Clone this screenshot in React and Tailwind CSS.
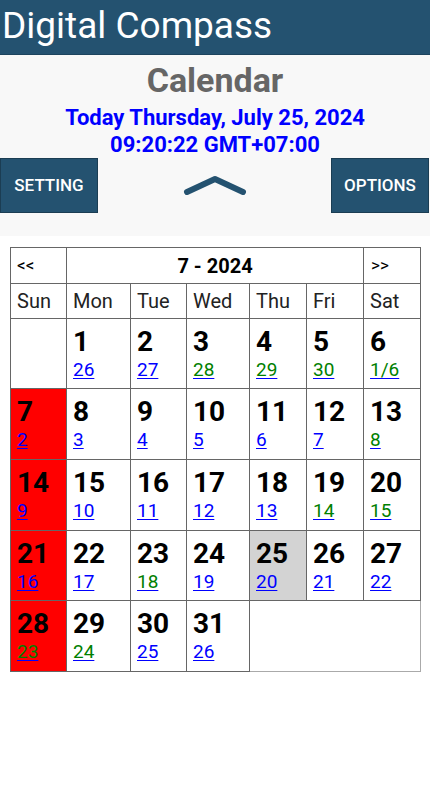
import React from 'react';

const days = ['Sun', 'Mon', 'Tue', 'Wed', 'Thu', 'Fri', 'Sat'];

// solar day -> lunar label
const lunar = {
  1: '26', 2: '27', 3: '28', 4: '29', 5: '30', 6: '1/6', 7: '2', 8: '3', 9: '4', 10: '5',
  11: '6', 12: '7', 13: '8', 14: '9', 15: '10', 16: '11', 17: '12', 18: '13', 19: '14', 20: '15',
  21: '16', 22: '17', 23: '18', 24: '19', 25: '20', 26: '21', 27: '22', 28: '23', 29: '24', 30: '25', 31: '26',
};
const green = [3, 4, 5, 6, 13, 19, 20, 23, 28, 29];

const weeks = [
  [null, 1, 2, 3, 4, 5, 6],
  [7, 8, 9, 10, 11, 12, 13],
  [14, 15, 16, 17, 18, 19, 20],
  [21, 22, 23, 24, 25, 26, 27],
  [28, 29, 30, 31],
];
const rowHeights = ['h-[70px]', 'h-[71px]', 'h-[71px]', 'h-[70px]', 'h-[71px]'];

const DayCell = ({ day, col }) => {
  if (!day) return <td className="border border-[#666] bg-white" />;
  const bg = col === 0 ? 'bg-[#ff0000]' : day === 25 ? 'bg-[#d3d3d3]' : 'bg-white';
  return (
    <td className={`border border-[#666] align-top pl-[6px] pt-[6px] ${bg}`}>
      <div className="text-[28px] font-bold leading-[33px] text-black">{day}</div>
      <a
        href="#"
        className={`block text-[19px] leading-[23px] underline decoration-[#0000ff] underline-offset-2 ${
          green.includes(day) ? 'text-[#008000]' : 'text-[#0000ff]'
        }`}
      >
        {lunar[day]}
      </a>
    </td>
  );
};

const App = () => {
  return (
    <div className="min-h-screen bg-white font-['Roboto',sans-serif]">
      <header className="h-[55px] bg-[#245270] border-b border-[#1d445e] pl-[2px] text-[37px] leading-[52px] text-white">
        Digital Compass
      </header>

      <section className="bg-[#f8f8f8] pb-[23px]">
        <h1 className="pt-[6px] text-center text-[34px] font-bold leading-[38px] text-[#666]">Calendar</h1>
        <div className="mt-[5px] text-center text-[22px] font-bold leading-[27px] text-[#0000ff]">
          <p>Today Thursday, July 25, 2024</p>
          <p>09:20:22 GMT+07:00</p>
        </div>
        <div className="flex h-[55px] items-center justify-between">
          <button className="h-full w-[98px] border border-[#1b3d53] bg-[#245270] text-[17px] font-medium text-white">
            SETTING
          </button>
          <svg width="64" height="22" viewBox="0 0 64 22" className="mt-[-2px]">
            <polyline
              points="4,18 32,5 60,18"
              fill="none"
              stroke="#245270"
              strokeWidth="6"
              strokeLinecap="round"
              strokeLinejoin="round"
            />
          </svg>
          <button className="mr-[1px] h-full w-[98px] border border-[#1b3d53] bg-[#245270] text-[17px] font-medium text-white">
            OPTIONS
          </button>
        </div>
      </section>

      <table className="ml-[10px] mt-[11px] w-[410px] table-fixed border-collapse text-black">
        <colgroup>
          <col className="w-[56px]" />
          <col className="w-[64px]" />
          <col className="w-[56px]" />
          <col className="w-[63px]" />
          <col className="w-[57px]" />
          <col className="w-[57px]" />
          <col className="w-[57px]" />
        </colgroup>
        <tbody>
          <tr className="h-[36px]">
            <td className="border border-[#666] pl-[6px] text-[17px] align-middle">&lt;&lt;</td>
            <td colSpan={5} className="border border-[#666] text-center text-[20px] font-bold align-middle">
              7 - 2024
            </td>
            <td className="border border-[#666] pl-[7px] text-[17px] align-middle">&gt;&gt;</td>
          </tr>
          <tr className="h-[35px]">
            {days.map((d) => (
              <td key={d} className="border border-[#666] pl-[6px] text-[20px] text-[#222] align-middle">
                {d}
              </td>
            ))}
          </tr>
          {weeks.map((w, i) => (
            <tr key={i} className={rowHeights[i]}>
              {w.map((day, col) => (
                <DayCell key={col} day={day} col={col} />
              ))}
              {w.length < 7 && <td colSpan={7 - w.length} className="border border-[#aaa] bg-white" />}
            </tr>
          ))}
        </tbody>
      </table>
    </div>
  );
};

export default App;
